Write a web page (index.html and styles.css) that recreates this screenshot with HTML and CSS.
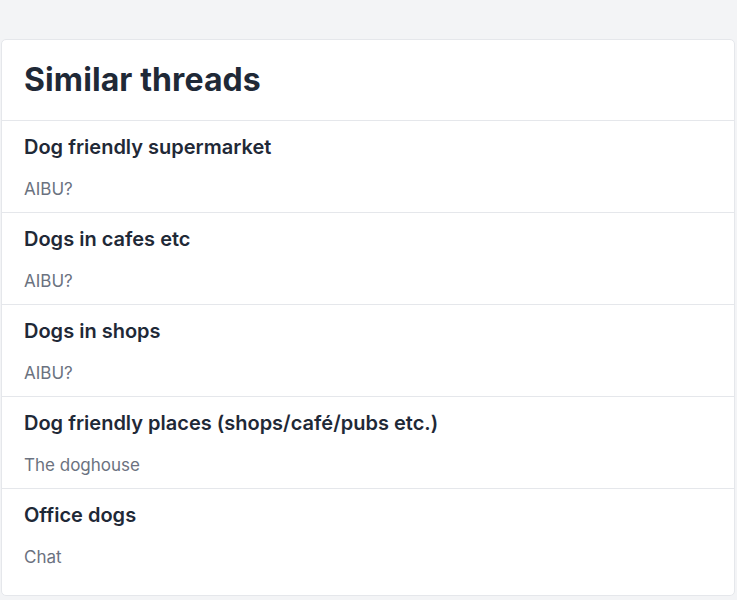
FILE: index.html
```html
<!DOCTYPE html>
<html lang="en">
  <head>
    <meta charset="UTF-8" />
    <meta name="viewport" content="width=device-width, initial-scale=1.0" />
    <title>Similar threads</title>
    <link rel="stylesheet" href="styles.css">
  </head>
  <body>
    <section class="threads">
      <h2 class="threads-title">Similar threads</h2>
      <ul class="thread-list">
        <li class="thread">
          <a class="thread-name" href="#">Dog friendly supermarket</a>
          <p class="thread-topic">AIBU?</p>
        </li>
        <li class="thread">
          <a class="thread-name" href="#">Dogs in cafes etc</a>
          <p class="thread-topic">AIBU?</p>
        </li>
        <li class="thread">
          <a class="thread-name" href="#">Dogs in shops</a>
          <p class="thread-topic">AIBU?</p>
        </li>
        <li class="thread">
          <a class="thread-name" href="#">Dog friendly places (shops/café/pubs etc.)</a>
          <p class="thread-topic">The doghouse</p>
        </li>
        <li class="thread">
          <a class="thread-name" href="#">Office dogs</a>
          <p class="thread-topic">Chat</p>
        </li>
      </ul>
    </section>
  </body>
</html>
```

FILE: styles.css
```css
body {
  margin: 0;
  padding: 0;
  background: #f3f4f6;
  font-family: Inter, "Noto Sans", sans-serif;
  color: #1f2937;
}
.threads {
  margin: 39px 2px 0 1px;
  padding-bottom: 15px;
  background: #fff;
  border: 1px solid #e5e7eb;
  border-radius: 5px;
}
.threads-title {
  margin: 0;
  padding: 20px 22px;
  font-size: 32px;
  line-height: 40px;
  font-weight: 700;
  letter-spacing: 0.1px;
}
.thread-list {
  margin: 0;
  padding: 0;
  list-style: none;
}
.thread {
  padding: 12px 22px 11px;
  border-top: 1px solid #e5e7eb;
}
.thread-name {
  display: block;
  font-size: 20px;
  line-height: 28px;
  font-weight: 600;
  color: #1f2937;
  text-decoration: none;
}
.thread-topic {
  margin: 16px 0 0;
  font-size: 17px;
  line-height: 24px;
  color: #6b7280;
}
```
